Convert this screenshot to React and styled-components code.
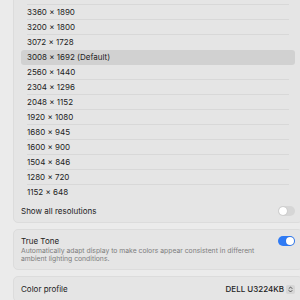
import styled, { createGlobalStyle } from "styled-components";

const Global = createGlobalStyle`
  html, body {
    margin: 0;
    padding: 0;
    background: #ebebeb;
  }
  body {
    font-family: Inter, "Liberation Sans", sans-serif;
    color: #222;
    -webkit-font-smoothing: antialiased;
  }
`;

const Page = styled.div`
  width: 300px;
  height: 300px;
  overflow: hidden;
  padding-left: 13px;
  box-sizing: border-box;
`;

const Stack = styled.div`
  width: 290px;
  margin-top: -13px;
  display: flex;
  flex-direction: column;
  gap: 6px;
`;

const Card = styled.div`
  background: #e5e5e5;
  border: 1px solid #dcdcdc;
  border-radius: 5px;
  padding: ${(p) => p.$pad || "0 7px"};
`;

const List = styled.div`
  display: flex;
  flex-direction: column;
  padding-top: 2px;
`;

const Row = styled.div`
  height: 15px;
  padding: 0 6px;
  border-radius: 3px;
  background: ${(p) => (p.$selected ? "#d1d1d1" : "transparent")};
`;

const RowInner = styled.div`
  height: 15px;
  box-sizing: border-box;
  display: flex;
  align-items: center;
  font-size: 8px;
  border-bottom: 1px solid ${(p) => (p.$line ? "#d8d8d8" : "transparent")};
`;

const SettingRow = styled.div`
  height: ${(p) => p.$h || "22px"};
  display: flex;
  align-items: center;
  justify-content: space-between;
  font-size: 8px;
`;

const Toggle = styled.div`
  width: 17px;
  height: 10px;
  border-radius: 5px;
  background: ${(p) => (p.$on ? "#2f7bf5" : "#d6d6d6")};
  position: relative;
  flex-shrink: 0;
  &::after {
    content: "";
    position: absolute;
    top: 1px;
    left: ${(p) => (p.$on ? "8px" : "1px")};
    width: 8px;
    height: 8px;
    border-radius: 50%;
    background: #fff;
    box-shadow: 0 0 1px rgba(0, 0, 0, 0.3);
  }
`;

const ToneHead = styled.div`
  display: flex;
  align-items: center;
  justify-content: space-between;
  font-size: 8px;
  height: 13px;
`;

const Desc = styled.div`
  font-size: 6.8px;
  line-height: 8px;
  color: #7d7d7d;
  width: 250px;
`;

const Picker = styled.div`
  display: flex;
  align-items: center;
  gap: 2px;
  font-size: 8px;
  font-weight: 500;
`;

const Stepper = styled.div`
  width: 9px;
  height: 9px;
  border-radius: 2px;
  background: #d6d6d6;
  display: flex;
  align-items: center;
  justify-content: center;
`;

const resolutions = [
  "3840 × 2160",
  "3360 × 1890",
  "3200 × 1800",
  "3072 × 1728",
  "3008 × 1692 (Default)",
  "2560 × 1440",
  "2304 × 1296",
  "2048 × 1152",
  "1920 × 1080",
  "1680 × 945",
  "1600 × 900",
  "1504 × 846",
  "1280 × 720",
  "1152 × 648",
];

const SELECTED = 4;

export default function App() {
  return (
    <>
      <Global />
      <Page>
        <Stack>
          <Card>
            <List>
              {resolutions.map((r, i) => (
                <Row key={r} $selected={i === SELECTED}>
                  <RowInner
                    $line={
                      i !== resolutions.length - 1 &&
                      i !== SELECTED &&
                      i !== SELECTED - 1
                    }
                  >
                    {r}
                  </RowInner>
                </Row>
              ))}
            </List>
            <SettingRow>
              Show all resolutions
              <Toggle />
            </SettingRow>
          </Card>
          <Card $pad="4px 7px 6px">
            <ToneHead>
              True Tone
              <Toggle $on />
            </ToneHead>
            <Desc>
              Automatically adapt display to make colors appear consistent in
              different ambient lighting conditions.
            </Desc>
          </Card>
          <Card>
            <SettingRow $h="24px">
              Color profile
              <Picker>
                DELL U3224KB
                <Stepper>
                  <svg width="5" height="7" viewBox="0 0 5 7" fill="none">
                    <path
                      d="M1 2.5 L2.5 1 L4 2.5 M1 4.5 L2.5 6 L4 4.5"
                      stroke="#333"
                      strokeWidth="0.8"
                      strokeLinecap="round"
                      strokeLinejoin="round"
                    />
                  </svg>
                </Stepper>
              </Picker>
            </SettingRow>
          </Card>
        </Stack>
      </Page>
    </>
  );
}
